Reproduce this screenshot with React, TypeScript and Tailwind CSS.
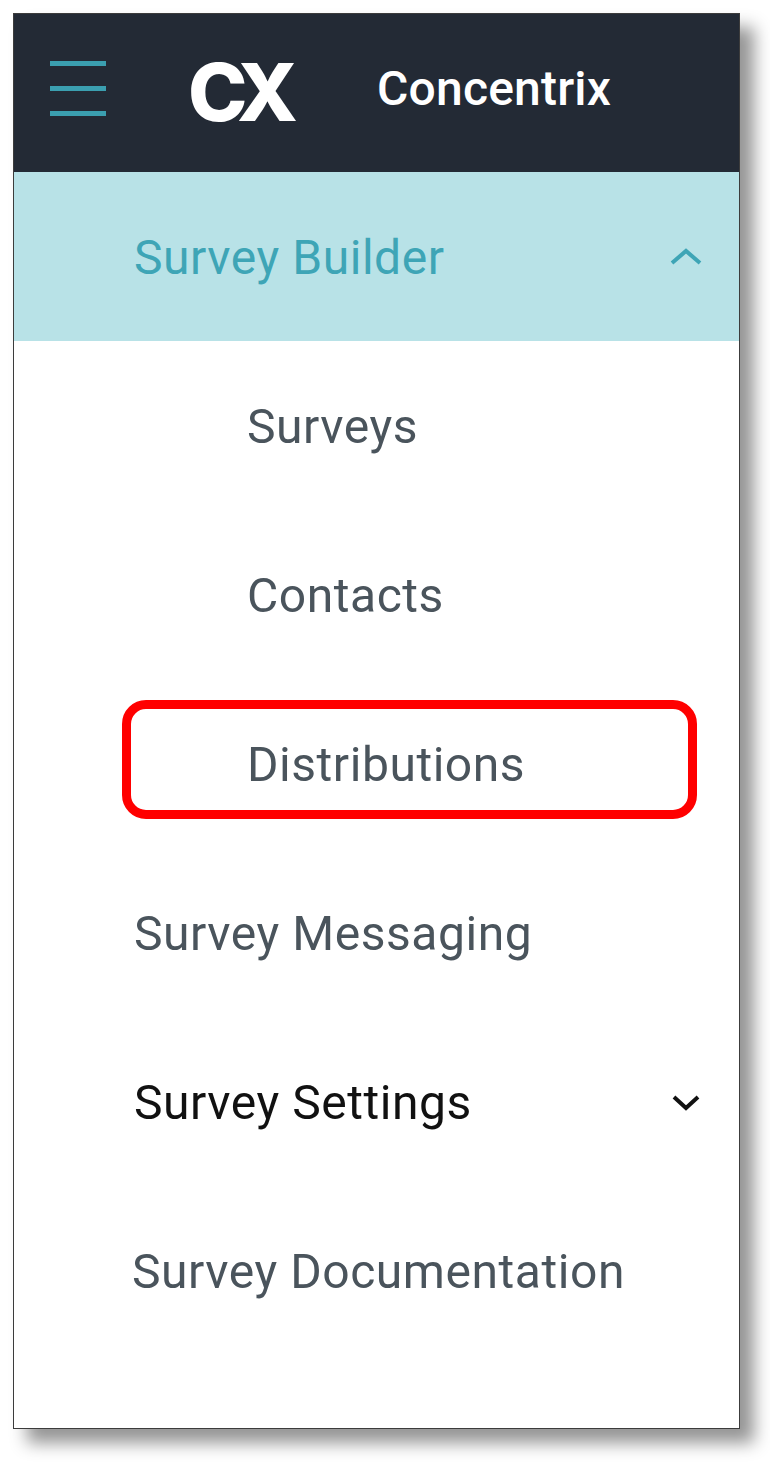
import React from 'react';

const TEXT_STYLE = "translate-y-[1px] font-['Roboto',sans-serif] text-[48px] leading-none tracking-[0.55px]";

const SUB_ITEMS = ['Surveys', 'Contacts', 'Distributions'];

const Chevron = ({ up, color }: { up?: boolean; color: string }) => (
  <svg width="32" height="20" viewBox="0 0 32 20" fill="none" aria-hidden="true">
    <path
      d={up ? 'M2 16 L16 4 L30 16' : 'M4 5 L16 16 L28 5'}
      stroke={color}
      strokeWidth="4"
    />
  </svg>
);

const App: React.FC = () => {
  return (
    <div className="h-[1466px] w-[770px] bg-white pl-[13px] pt-[13px]">
      <div className="flex h-[1416px] w-[727px] flex-col border border-[#3c3c3c] bg-white shadow-[14px_14px_16px_rgba(0,0,0,0.42)] blur-[0.6px]">
        {/* Top bar */}
        <div className="flex h-[158px] shrink-0 items-center bg-[#232a35] pb-[9px] pl-[36px]">
          <div className="flex w-[56px] flex-col gap-[19.5px]">
            <div className="h-[5.5px] bg-[#3b9fb0]" />
            <div className="h-[5.5px] bg-[#3b9fb0]" />
            <div className="h-[5.5px] bg-[#3b9fb0]" />
          </div>
          <span className="ml-[82px] w-[103px] translate-y-[3px] font-['Inter',sans-serif] text-[80px] leading-none font-extrabold tracking-[-9px] text-white">
            CX
          </span>
          <span className="ml-[86px] font-['Roboto',sans-serif] text-[48px] leading-none font-medium tracking-[0.2px] text-white">
            Concentrix
          </span>
        </div>

        {/* Active section */}
        <div className="flex h-[169px] shrink-0 items-center justify-between bg-[#b8e2e7] pr-[37px] pl-[120px]">
          <span className={`${TEXT_STYLE} text-[#3ea5b6]`}>Survey Builder</span>
          <Chevron up color="#3ea5b6" />
        </div>

        {/* Sub items */}
        {SUB_ITEMS.map((item) => (
          <div key={item} className="relative flex h-[169px] shrink-0 items-center pl-[233px]">
            <span className={`${TEXT_STYLE} text-[#4a545c]`}>{item}</span>
            {item === 'Distributions' && (
              <div className="absolute top-[21px] left-[108px] h-[119px] w-[575px] rounded-[24px] border-[9px] border-[#ff0000]" />
            )}
          </div>
        ))}

        <div className="flex h-[169px] shrink-0 items-center pl-[120px]">
          <span className={`${TEXT_STYLE} text-[#4a545c]`}>Survey Messaging</span>
        </div>

        <div className="flex h-[169px] shrink-0 items-center justify-between pr-[37px] pl-[120px]">
          <span className={`${TEXT_STYLE} text-[#111111]`}>Survey Settings</span>
          <Chevron color="#111111" />
        </div>

        <div className="flex h-[169px] shrink-0 items-center pl-[118px]">
          <span className={`${TEXT_STYLE} text-[#4a545c]`}>Survey Documentation</span>
        </div>
      </div>
    </div>
  );
};

export default App;
